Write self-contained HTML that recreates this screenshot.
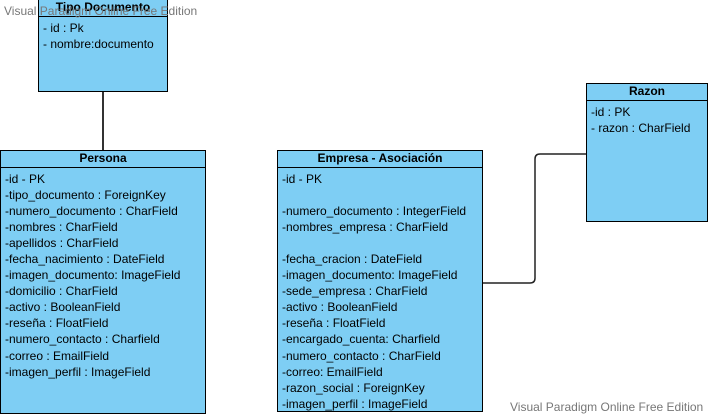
<!DOCTYPE html>
<html><head><style>
body{margin:0;width:708px;height:417px;background:#fff;position:relative;overflow:hidden;font-family:"Liberation Sans",Arial,sans-serif;font-size:12px;color:#000}
.b{position:absolute;background:#7ecef4;border:1px solid #000;box-sizing:border-box}
.h{height:16px;border-bottom:1px solid #000;text-align:center;font-weight:bold;line-height:15px;font-size:12px}
.r{padding:3px 0 0 4px;line-height:16.05px;white-space:pre}
.w{position:absolute;color:#777;font-size:12px}
</style></head><body>
<svg style="position:absolute;left:0;top:0" width="708" height="417">
<line x1="103" y1="92" x2="103" y2="150" stroke="#333" stroke-width="2"/>
<path d="M482 283 H530 Q535 283 535 278 V159 Q535 154 540 154 H586" fill="none" stroke="#222" stroke-width="1.5"/>
</svg>
<div class="b" style="left:38px;top:-1px;width:130px;height:93px"><div class="h">Tipo Documento</div><div class="r">- id : Pk
- nombre:documento</div></div>
<div class="b" style="left:0;top:150px;width:206px;height:264px"><div class="h">Persona</div><div class="r">-id - PK
-tipo_documento : ForeignKey
-numero_documento : CharField
-nombres : CharField
-apellidos : CharField
-fecha_nacimiento : DateField
-imagen_documento: ImageField
-domicilio : CharField
-activo : BooleanField
-reseña : FloatField
-numero_contacto : Charfield
-correo : EmailField
-imagen_perfil : ImageField</div></div>
<div class="b" style="left:277px;top:150px;width:206px;height:262px"><div class="h">Empresa - Asociación</div><div class="r">-id - PK

-numero_documento : IntegerField
-nombres_empresa : CharField

-fecha_cracion : DateField
-imagen_documento: ImageField
-sede_empresa : CharField
-activo : BooleanField
-reseña : FloatField
-encargado_cuenta: Charfield
-numero_contacto : CharField
-correo: EmailField
-razon_social : ForeignKey
-imagen_perfil : ImageField</div></div>
<div class="b" style="left:586px;top:83px;width:122px;height:139px"><div class="h">Razon</div><div class="r">-id : PK
- razon : CharField</div></div>
<div class="w" style="left:4px;top:4px">Visual Paradigm Online Free Edition</div>
<div class="w" style="left:510px;top:400px">Visual Paradigm Online Free Edition</div>
</body></html>
